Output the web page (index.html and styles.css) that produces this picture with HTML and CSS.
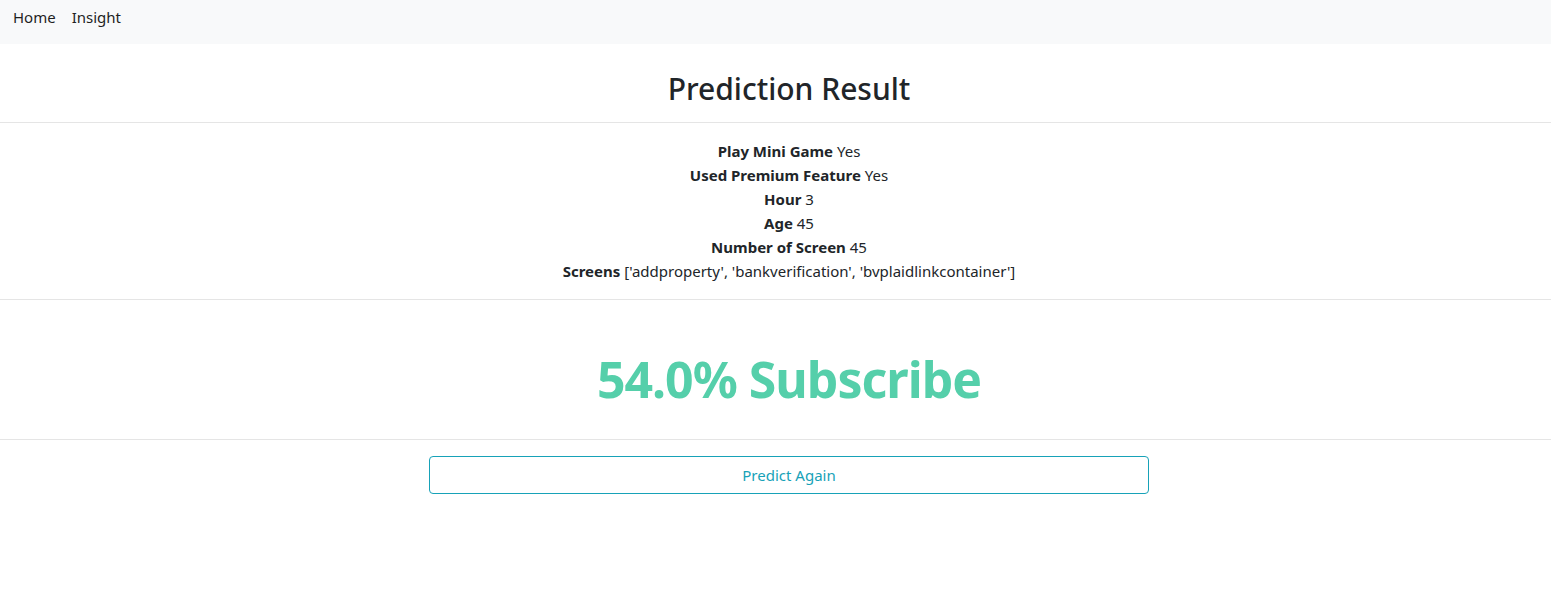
FILE: index.html
```html
<!DOCTYPE html>
<html lang="en">
<head>
<meta charset="utf-8">
<title>Prediction Result</title>
<link rel="stylesheet" href="styles.css">
</head>
<body>
<nav class="navbar">
  <a class="nav-link" href="#">Home</a>
  <a class="nav-link" href="#">Insight</a>
</nav>
<main class="page">
  <h1 class="title">Prediction Result</h1>
  <hr class="rule">
  <div class="details">
    <div><b>Play Mini Game</b> Yes</div>
    <div><b>Used Premium Feature</b> Yes</div>
    <div><b>Hour</b> 3</div>
    <div><b>Age</b> 45</div>
    <div><b>Number of Screen</b> 45</div>
    <div><b>Screens</b> ['addproperty', 'bankverification', 'bvplaidlinkcontainer']</div>
  </div>
  <hr class="rule">
  <div class="result">54.0% Subscribe</div>
  <hr class="rule">
  <div class="actions">
    <a class="btn-outline" href="#">Predict Again</a>
  </div>
</main>
</body>
</html>
```
FILE: styles.css
```css
* { box-sizing: border-box; }
html, body { margin: 0; padding: 0; background: #fff; }
body {
  font-family: "Noto Sans", "Open Sans", sans-serif;
  font-size: 15px;
  line-height: 24px;
  color: #212529;
}
.navbar {
  display: flex;
  gap: 16px;
  height: 44px;
  padding: 5px 13px 0;
  background: #f8f9fa;
}
.nav-link {
  color: #1f1f1f;
  text-decoration: none;
  font-size: 15px;
  line-height: 24px;
}
.page { display: flex; flex-direction: column; }
.title {
  margin: 26px 0 14px;
  padding-left: 27px;
  text-align: center;
  font-size: 30px;
  font-weight: 500;
  line-height: 38px;
  color: #212529;
}
.rule {
  width: 100%;
  margin: 0;
  border: 0;
  border-top: 1px solid #e5e5e5;
}
.details {
  padding: 16px 0 16px 27px;
  text-align: center;
}
.details b { font-weight: 700; }
.result {
  padding: 46px 0 26px 27px;
  text-align: center;
  font-size: 50px;
  letter-spacing: -1px;
  line-height: 67px;
  font-weight: 700;
  color: #55cfaa;
}
.actions {
  display: flex;
  justify-content: center;
  padding: 16px 0 0 27px;
}
.btn-outline {
  width: 720px;
  height: 38px;
  display: flex;
  align-items: center;
  justify-content: center;
  border: 1px solid #17a2b8;
  border-radius: 4px;
  color: #17a2b8;
  text-decoration: none;
  font-size: 15px;
}
```
